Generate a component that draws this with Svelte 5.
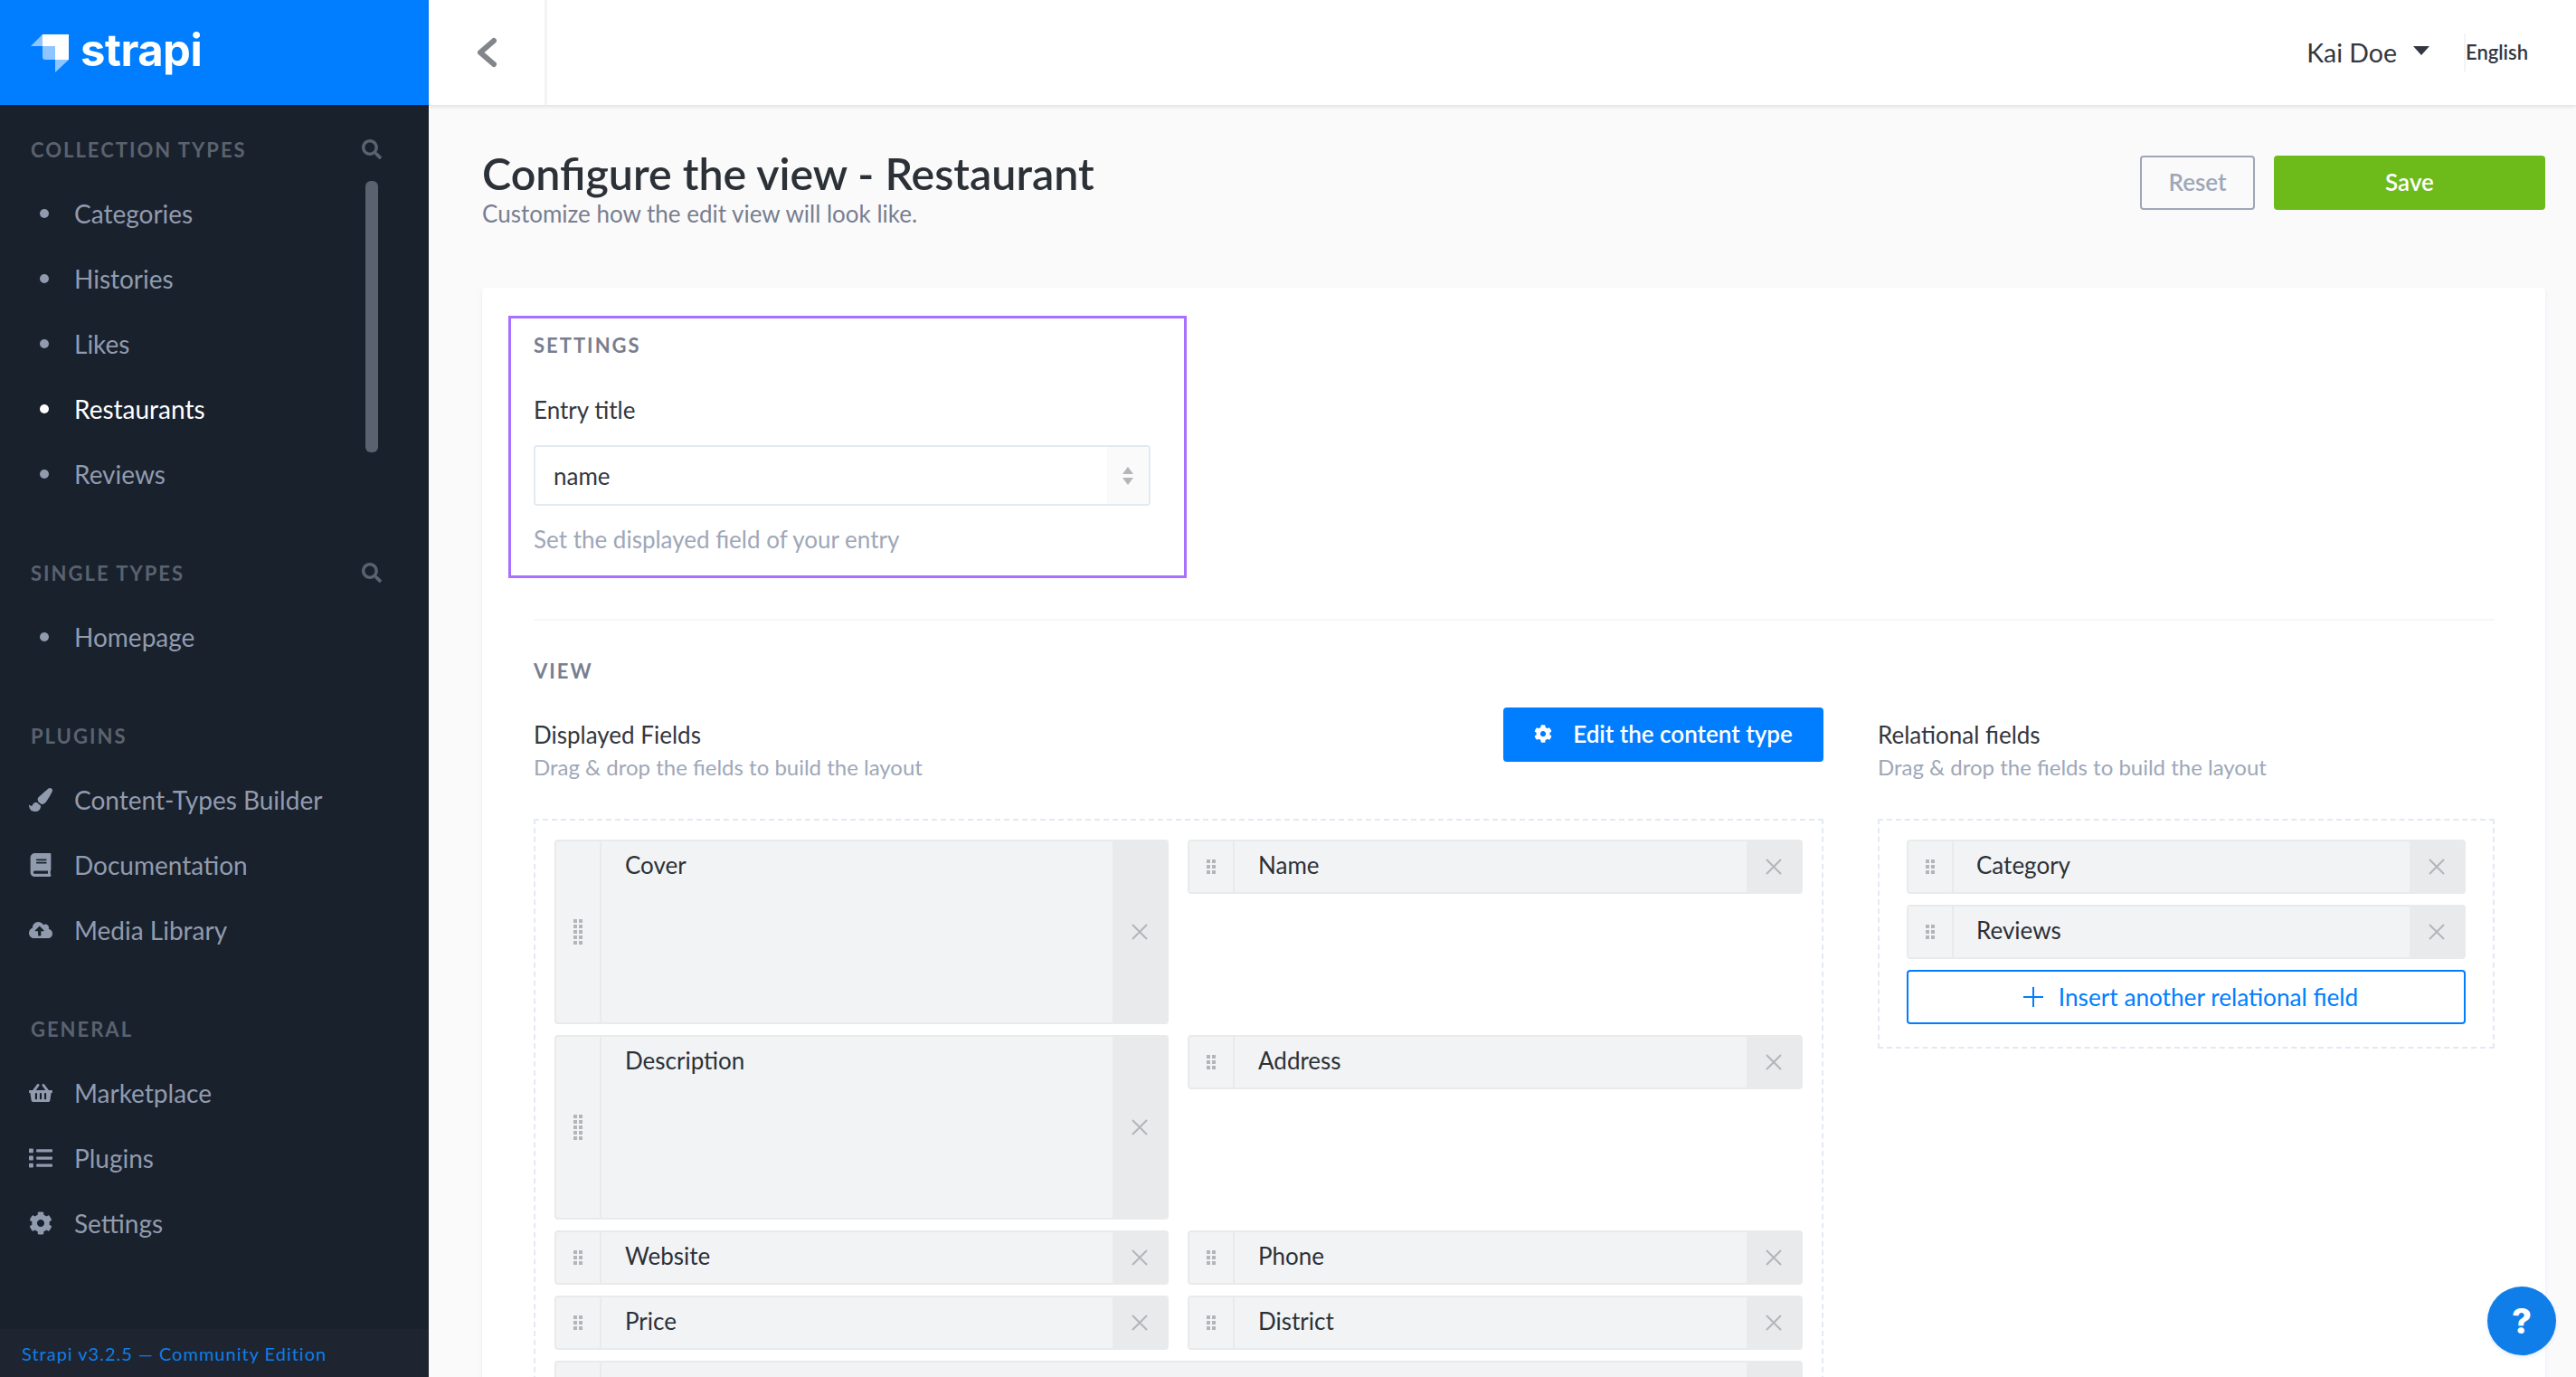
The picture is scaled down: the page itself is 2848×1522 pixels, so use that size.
<script>
  const icons = {
    search: { box: '0 0 512 512', d: 'M505 442.7L405.3 343c-4.5-4.5-10.6-7-17-7H372c27.6-35.3 44-79.7 44-128C416 93.1 322.9 0 208 0S0 93.1 0 208s93.1 208 208 208c48.3 0 92.7-16.4 128-44v16.3c0 6.4 2.5 12.5 7 17l99.7 99.7c9.4 9.4 24.6 9.4 33.9 0l28.3-28.3c9.4-9.4 9.4-24.6.1-34zM208 336c-70.7 0-128-57.2-128-128 0-70.7 57.2-128 128-128 70.7 0 128 57.2 128 128 0 70.7-57.2 128-128 128z' },
    brush: { box: '0 0 512 512', d: 'M167.02 309.34c-40.12 2.58-76.53 17.86-97.19 72.3-2.35 6.21-8 9.98-14.59 9.98-11.11 0-45.46-27.67-55.25-34.35C0 439.62 37.93 512 128 512c75.86 0 128-43.77 128-120.19 0-3.11-.65-6.08-.97-9.13l-88.01-73.34zM457.89 0c-15.16 0-29.37 6.71-40.21 16.45C213.27 199.05 192 203.34 192 257.09c0 13.7 3.25 26.76 8.73 38.7l63.82 53.18c7.21 1.8 14.64 3.03 22.39 3.03 62.11 0 98.11-45.47 211.16-256.46 7.38-14.35 13.9-29.85 13.9-45.99C512 20.64 486 0 457.89 0z' },
    book: { box: '0 0 448 512', d: 'M448 360V24c0-13.3-10.7-24-24-24H96C43 0 0 43 0 96v320c0 53 43 96 96 96h328c13.3 0 24-10.7 24-24v-16c0-7.5-3.5-14.3-8.9-18.7-4.2-15.4-4.2-59.3 0-74.7 5.4-4.3 8.9-11.1 8.9-18.6zM128 134c0-3.3 2.7-6 6-6h212c3.3 0 6 2.7 6 6v20c0 3.3-2.7 6-6 6H134c-3.3 0-6-2.7-6-6v-20zm0 64c0-3.3 2.7-6 6-6h212c3.3 0 6 2.7 6 6v20c0 3.3-2.7 6-6 6H134c-3.3 0-6-2.7-6-6v-20zm253.4 250H96c-17.7 0-32-14.3-32-32 0-17.6 14.4-32 32-32h285.4c-1.9 17.1-1.9 46.9 0 64z' },
    cloud: { box: '0 0 640 512', d: 'M537.6 226.6c4.1-10.7 6.4-22.4 6.4-34.6 0-53-43-96-96-96-19.7 0-38.1 6-53.3 16.2C367 64.2 315.3 32 256 32c-88.4 0-160 71.6-160 160 0 2.7.1 5.4.2 8.1C40.2 219.8 0 273.2 0 336c0 79.5 64.5 144 144 144h368c70.7 0 128-57.3 128-128 0-61.9-44-113.6-102.4-125.4zM393.4 288H328v112c0 8.8-7.2 16-16 16h-48c-8.8 0-16-7.2-16-16V288h-65.4c-14.3 0-21.4-17.2-11.3-27.3l105.4-105.4c6.2-6.2 16.4-6.2 22.6 0l105.4 105.4c10.1 10.1 2.9 27.3-11.3 27.3z' },
    basket: { box: '0 0 576 512', d: 'M576 216v16c0 13.255-10.745 24-24 24h-8l-26.113 182.788C514.509 462.435 494.257 480 470.37 480H105.63c-23.887 0-44.139-17.565-47.518-41.212L32 256h-8c-13.255 0-24-10.745-24-24v-16c0-13.255 10.745-24 24-24h67.341l106.78-146.821c10.395-14.292 30.407-17.453 44.701-7.058 14.293 10.395 17.453 30.408 7.058 44.701L170.477 192h235.046L326.12 82.821c-10.395-14.292-7.234-34.306 7.059-44.701 14.291-10.395 34.306-7.235 44.701 7.058L484.659 192H552c13.255 0 24 10.745 24 24zM312 392V280c0-13.255-10.745-24-24-24s-24 10.745-24 24v112c0 13.255 10.745 24 24 24s24-10.745 24-24zm112 0V280c0-13.255-10.745-24-24-24s-24 10.745-24 24v112c0 13.255 10.745 24 24 24s24-10.745 24-24zm-224 0V280c0-13.255-10.745-24-24-24s-24 10.745-24 24v112c0 13.255 10.745 24 24 24s24-10.745 24-24z' },
    list: { box: '0 0 512 512', d: 'M80 368H16a16 16 0 0 0-16 16v64a16 16 0 0 0 16 16h64a16 16 0 0 0 16-16v-64a16 16 0 0 0-16-16zm0-320H16A16 16 0 0 0 0 64v64a16 16 0 0 0 16 16h64a16 16 0 0 0 16-16V64a16 16 0 0 0-16-16zm0 160H16a16 16 0 0 0-16 16v64a16 16 0 0 0 16 16h64a16 16 0 0 0 16-16v-64a16 16 0 0 0-16-16zm416 176H176a16 16 0 0 0-16 16v32a16 16 0 0 0 16 16h320a16 16 0 0 0 16-16v-32a16 16 0 0 0-16-16zm0-320H176a16 16 0 0 0-16 16v32a16 16 0 0 0 16 16h320a16 16 0 0 0 16-16V80a16 16 0 0 0-16-16zm0 160H176a16 16 0 0 0-16 16v32a16 16 0 0 0 16 16h320a16 16 0 0 0 16-16v-32a16 16 0 0 0-16-16z' },
    cog: { box: '0 0 512 512', d: 'M487.4 315.7l-42.6-24.6c4.3-23.2 4.3-47 0-70.2l42.6-24.6c4.9-2.8 7.1-8.6 5.5-14-11.1-35.6-30-67.8-54.7-94.6-3.8-4.1-10-5.1-14.8-2.3L380.8 110c-17.9-15.4-38.5-27.3-60.8-35.1V25.8c0-5.6-3.9-10.5-9.4-11.7-36.7-8.2-74.3-7.8-109.2 0-5.5 1.2-9.4 6.1-9.4 11.7V75c-22.2 7.9-42.8 19.8-60.8 35.1L88.7 85.5c-4.9-2.8-11-1.9-14.8 2.3-24.7 26.7-43.6 58.9-54.7 94.6-1.7 5.4.6 11.2 5.5 14L67.3 221c-4.3 23.2-4.3 47 0 70.2l-42.6 24.6c-4.9 2.8-7.1 8.6-5.5 14 11.1 35.6 30 67.8 54.7 94.6 3.8 4.1 10 5.1 14.8 2.3l42.6-24.6c17.9 15.4 38.5 27.3 60.8 35.1v49.2c0 5.6 3.9 10.5 9.4 11.7 36.7 8.2 74.3 7.8 109.2 0 5.5-1.2 9.4-6.1 9.4-11.7v-49.2c22.2-7.9 42.8-19.8 60.8-35.1l42.6 24.6c4.9 2.8 11 1.9 14.8-2.3 24.7-26.7 43.6-58.9 54.7-94.6 1.5-5.5-.7-11.3-5.6-14.1zM256 336c-44.1 0-80-35.9-80-80s35.9-80 80-80 80 35.9 80 80-35.9 80-80 80z' }
  };

  const sections = [
    { title: 'Collection Types', search: true, items: [
      { label: 'Categories' }, { label: 'Histories' }, { label: 'Likes' },
      { label: 'Restaurants', active: true }, { label: 'Reviews' }
    ] },
    { title: 'Single Types', search: true, items: [{ label: 'Homepage' }] },
    { title: 'Plugins', items: [
      { label: 'Content-Types Builder', icon: 'brush' },
      { label: 'Documentation', icon: 'book' },
      { label: 'Media Library', icon: 'cloud' }
    ] },
    { title: 'General', items: [
      { label: 'Marketplace', icon: 'basket' },
      { label: 'Plugins', icon: 'list' },
      { label: 'Settings', icon: 'cog' }
    ] }
  ];

  // each row of the layout editor, the first cell sets the height
  const rows = [
    [{ label: 'Cover', tall: true }, { label: 'Name' }],
    [{ label: 'Description', tall: true }, { label: 'Address' }],
    [{ label: 'Website' }, { label: 'Phone' }],
    [{ label: 'Price' }, { label: 'District' }],
    [{ label: '', wide: true }]
  ];

  function dots(count) {
    const out = [];
    for (let r = 0; r < count; r++) {
      out.push([0, r * 6]);
      out.push([6, r * 6]);
    }
    return out;
  }
</script>

{#snippet field(f)}
  <div class="field" class:tall={f.tall} class:wide={f.wide}>
    <div class="grip">
      <svg width="10" height={(f.tall ? 5 : 3) * 6 - 2} aria-hidden="true">
        {#each dots(f.tall ? 5 : 3) as [x, y]}
          <rect {x} {y} width="4" height="4" />
        {/each}
      </svg>
    </div>
    <div class="field-name">{f.label}</div>
    <div class="remove">
      <svg width="18" height="18" viewBox="0 0 18 18" aria-hidden="true"><path d="M1 1l16 16M17 1L1 17" /></svg>
    </div>
  </div>
{/snippet}

<div class="app">
  <aside class="sidebar">
    <div class="brand">
      <svg class="mark" width="44" height="44" viewBox="34 39 44 44" aria-hidden="true">
        <path d="M47 40h29v28H61V53H47z" fill="#fff" />
        <path d="M47 40v13H34z" fill="#fff" opacity=".55" />
        <path d="M47 53h14v15H50a3 3 0 0 1-3-3z" fill="#fff" opacity=".55" />
        <path d="M61 68h15L61 82z" fill="#fff" opacity=".55" />
      </svg>
      <span class="wordmark">strapi</span>
    </div>

    <nav class="nav">
      {#each sections as s}
        <section class="nav-section">
          <div class="nav-head">
            <span>{s.title}</span>
            {#if s.search}
              <svg class="nav-search" viewBox={icons.search.box} aria-hidden="true"><path d={icons.search.d} /></svg>
            {/if}
          </div>
          <ul>
            {#each s.items as item}
              <li class:active={item.active}>
                <span class="nav-icon">
                  {#if item.icon}
                    <svg viewBox={icons[item.icon].box} aria-hidden="true"><path d={icons[item.icon].d} /></svg>
                  {:else}
                    <i class="bullet"></i>
                  {/if}
                </span>
                {item.label}
              </li>
            {/each}
          </ul>
        </section>
      {/each}
      <div class="scroll-thumb"></div>
    </nav>

    <div class="version">Strapi v3.2.5 — Community Edition</div>
  </aside>

  <main class="main">
    <header class="topbar">
      <div class="back">
        <svg width="24" height="34" viewBox="0 0 24 34" aria-hidden="true"><path d="M20 4L5 17l15 13" /></svg>
      </div>
      <div class="user">
        <span class="user-name">Kai Doe</span>
        <i class="caret"></i>
        <span class="lang">English</span>
      </div>
    </header>

    <div class="content">
      <div class="page-head">
        <div>
          <h1>Configure the view - Restaurant</h1>
          <p>Customize how the edit view will look like.</p>
        </div>
        <div class="actions">
          <button class="btn-reset">Reset</button>
          <button class="btn-save">Save</button>
        </div>
      </div>

      <div class="card">
        <section class="settings">
          <h2>Settings</h2>
          <div class="label">Entry title</div>
          <div class="select">
            <span class="select-value">name</span>
            <span class="select-arrows">
              <svg width="14" height="20" viewBox="0 0 14 20" aria-hidden="true"><path d="M7 0l6 8H1zM7 20l6-8H1z" /></svg>
            </span>
          </div>
          <div class="help">Set the displayed field of your entry</div>
        </section>

        <hr />

        <h2 class="view-title">View</h2>
        <div class="view-grid">
          <div>
            <div class="col-head">
              <div class="col-text">
                <div class="label">Displayed Fields</div>
                <div class="help">Drag &amp; drop the fields to build the layout</div>
              </div>
              <button class="btn-edit">
                <svg width="20" height="20" viewBox={icons.cog.box} aria-hidden="true"><path d={icons.cog.d} /></svg>
                Edit the content type
              </button>
            </div>
            <div class="dropzone fields">
              {#each rows as row}
                <div class="field-row" class:tall-row={row[0].tall}>
                  {#each row as f}
                    {@render field(f)}
                  {/each}
                </div>
              {/each}
            </div>
          </div>

          <div>
            <div class="col-head">
              <div class="col-text">
                <div class="label">Relational fields</div>
                <div class="help">Drag &amp; drop the fields to build the layout</div>
              </div>
            </div>
            <div class="dropzone relations">
              {@render field({ label: 'Category' })}
              {@render field({ label: 'Reviews' })}
              <button class="btn-insert">
                <svg width="22" height="22" viewBox="0 0 22 22" aria-hidden="true"><path d="M11 0v22M0 11h22" /></svg>
                Insert another relational field
              </button>
            </div>
          </div>
        </div>
      </div>
    </div>
  </main>

  <button class="help-fab">?</button>
</div>

<style>
  :global(body) {
    margin: 0;
    background: #fafafb;
  }

  * {
    box-sizing: border-box;
  }

  .app {
    display: flex;
    height: 1522px;
    overflow: hidden;
    font-family: Lato, "Liberation Sans", sans-serif;
    font-size: 26px;
    color: #333740;
    position: relative;
  }

  /* sidebar */
  .sidebar {
    width: 474px;
    flex: none;
    display: flex;
    flex-direction: column;
    background: #19212d;
  }

  .brand {
    height: 116px;
    flex: none;
    background: #007eff;
    display: flex;
    align-items: center;
    gap: 11px;
    padding: 0 0 6px 34px;
  }

  .mark {
    margin-top: 8px;
  }

  .wordmark {
    font-family: Inter, sans-serif;
    font-weight: 700;
    font-size: 49px;
    line-height: 1;
    color: #fff;
    letter-spacing: -0.5px;
  }

  .nav {
    flex: 1;
    position: relative;
    padding-top: 32px;
  }

  .nav-section {
    margin-bottom: 56px;
  }

  .nav-head {
    height: 34px;
    margin-bottom: 18px;
    padding: 0 52px 0 34px;
    display: flex;
    justify-content: space-between;
    align-items: center;
    font-size: 22px;
    font-weight: 700;
    letter-spacing: 2px;
    text-transform: uppercase;
    color: #5b626f;
  }

  .nav-search {
    width: 22px;
    height: 22px;
    fill: #5b626f;
  }

  ul {
    list-style: none;
    margin: 0;
    padding: 0;
  }

  li {
    height: 72px;
    display: flex;
    align-items: center;
    padding-left: 32px;
    font-size: 28px;
    color: #919bae;
  }

  li.active {
    color: #fff;
  }

  .nav-icon {
    width: 50px;
    flex: none;
    display: flex;
    align-items: center;
  }

  .nav-icon svg {
    width: 26px;
    height: 26px;
    fill: #919bae;
  }

  .bullet {
    width: 10px;
    height: 10px;
    margin-left: 12px;
    border-radius: 50%;
    background: currentColor;
  }

  .scroll-thumb {
    position: absolute;
    top: 84px;
    left: 404px;
    width: 14px;
    height: 300px;
    border-radius: 6px;
    background: #5a6270;
  }

  .version {
    height: 53px;
    flex: none;
    background: #1e2530;
    padding-left: 24px;
    display: flex;
    align-items: center;
    font-size: 20px;
    letter-spacing: 1px;
    color: #0e7de7;
  }

  /* main */
  .main {
    flex: 1;
    min-width: 0;
  }

  .topbar {
    height: 116px;
    background: #fff;
    box-shadow: 0 2px 4px rgba(0, 0, 0, 0.1);
    display: flex;
    align-items: center;
    justify-content: space-between;
    padding-right: 53px;
    position: relative;
  }

  .back {
    width: 131px;
    height: 100%;
    border-right: 3px solid #f3f3f4;
    display: flex;
    align-items: center;
    justify-content: center;
  }

  .back path {
    fill: none;
    stroke: #82858b;
    stroke-width: 6;
    stroke-linecap: round;
    stroke-linejoin: round;
  }

  .user {
    display: flex;
    align-items: center;
  }

  .user-name {
    font-size: 28.5px;
  }

  .caret {
    width: 0;
    height: 0;
    margin: 0 38px 0 18px;
    border-left: 9px solid transparent;
    border-right: 9px solid transparent;
    border-top: 10px solid #333740;
    transform: translateY(-2px);
  }

  .lang {
    font-size: 22px;
    font-weight: 600;
    line-height: 42px;
    border-left: 2px solid #f3f3f4;
  }

  .content {
    padding: 0 34px 0 59px;
  }

  .page-head {
    height: 202px;
    display: flex;
    justify-content: space-between;
    padding-top: 55px;
  }

  h1 {
    margin: 0;
    font-size: 48.4px;
    line-height: 40px;
    font-weight: 600;
    color: #2c3138;
  }

  .page-head p {
    margin: 7px 0 0;
    line-height: 36px;
    color: #787e8f;
  }

  .actions {
    display: flex;
    gap: 21px;
    padding-top: 1px;
  }

  button {
    font-family: inherit;
    font-size: 26px;
    cursor: pointer;
  }

  .btn-reset {
    width: 127px;
    height: 60px;
    padding-bottom: 4px;
    background: transparent;
    border: 2px solid #9ea7b8;
    border-radius: 4px;
    font-weight: 600;
    color: #9ea7b8;
  }

  .btn-save {
    width: 300px;
    height: 60px;
    padding-bottom: 3px;
    background: #6dbb1a;
    border: 0;
    border-radius: 4px;
    font-weight: 600;
    color: #fff;
  }

  .card {
    background: #fff;
    border-radius: 4px;
    box-shadow: 0 2px 4px #e3e9f3;
    padding: 31px 56px 0 57px;
  }

  h2 {
    margin: 0;
    font-size: 22px;
    line-height: 30px;
    font-weight: 700;
    letter-spacing: 2px;
    text-transform: uppercase;
    color: #787e8f;
  }

  .settings {
    width: 750px;
    height: 290px;
    margin-left: -28px;
    border: 3px solid #a970ff;
    padding: 15px 0 0 25px;
  }

  .label {
    line-height: 36px;
  }

  .settings .label {
    margin-top: 38px;
  }

  .select {
    width: 682px;
    height: 67px;
    margin-top: 21px;
    border: 2px solid #e3e9f3;
    border-radius: 4px;
    display: flex;
    justify-content: space-between;
    align-items: stretch;
  }

  .select-value {
    padding-left: 20px;
    line-height: 65px;
  }

  .select-arrows {
    width: 46px;
    background: #fafafb;
    display: flex;
    align-items: center;
    justify-content: center;
  }

  .select-arrows path {
    fill: #b3b5b9;
  }

  .help {
    line-height: 36px;
    color: #9ea7b8;
  }

  .settings .help {
    margin-top: 19px;
  }

  hr {
    margin: 45px 0 0;
    border: 0;
    border-top: 2px solid #f6f6f6;
  }

  .view-title {
    margin-top: 41px;
  }

  .view-grid {
    display: grid;
    grid-template-columns: 1426px 682px;
    gap: 60px;
  }

  .col-head {
    height: 148px;
    padding-top: 12px;
    display: flex;
    justify-content: space-between;
    align-items: flex-start;
  }

  .col-text {
    margin-top: 25px;
  }

  .col-text .help {
    font-size: 24px;
  }

  .btn-edit {
    width: 354px;
    height: 60px;
    margin-top: 13px;
    padding-bottom: 3px;
    background: #007eff;
    border: 0;
    border-radius: 4px;
    display: flex;
    align-items: center;
    justify-content: center;
    gap: 23px;
    font-weight: 600;
    color: #fff;
  }

  .btn-edit path {
    fill: #fff;
  }

  .dropzone {
    border: 2px dashed #e3e9f3;
    border-radius: 2px;
  }

  .fields {
    padding: 21px 21px 40px 21px;
    display: flex;
    flex-direction: column;
    gap: 12px;
  }

  .field-row {
    display: grid;
    grid-template-columns: 679px 680px;
    column-gap: 21px;
    height: 60px;
    align-items: start;
  }

  .field-row.tall-row {
    height: 204px;
  }

  .relations {
    padding: 21px 30px 25px 30px;
    display: grid;
    grid-auto-rows: 60px;
    row-gap: 12px;
  }

  .field {
    height: 60px;
    display: flex;
    background: #f2f3f4;
    border: 2px solid #e9eaeb;
    border-radius: 4px;
    overflow: hidden;
    color: #2c3138;
  }

  .field.tall {
    height: 204px;
  }

  .field.wide {
    grid-column: span 2;
  }

  .grip {
    width: 50px;
    flex: none;
    display: flex;
    align-items: center;
    justify-content: center;
    border-right: 2px solid #e9eaeb;
  }

  .grip rect {
    fill: #b3b5b9;
  }

  .field-name {
    flex: 1;
    padding-left: 26px;
    line-height: 53px;
  }

  .relations .field-name {
    padding-left: 25px;
  }

  .remove {
    width: 60px;
    flex: none;
    background: #e9eaeb;
    display: flex;
    align-items: center;
    justify-content: center;
  }

  .remove path {
    fill: none;
    stroke: #b3b5b9;
    stroke-width: 2;
  }

  .btn-insert {
    padding: 0 0 0 10px;
    background: #fff;
    border: 2px solid #007eff;
    border-radius: 4px;
    display: flex;
    align-items: center;
    justify-content: center;
    gap: 17px;
    font-size: 26.2px;
    color: #007eff;
  }

  .btn-insert path {
    fill: none;
    stroke: #007eff;
    stroke-width: 2;
  }

  .help-fab {
    position: absolute;
    left: 2750px;
    top: 1422px;
    width: 76px;
    height: 76px;
    border: 0;
    border-radius: 50%;
    background: #107ee8;
    box-shadow: 0 2px 4px #e3e9f3;
    font-family: Inter, sans-serif;
    font-size: 38px;
    font-weight: 800;
    color: #fff;
  }
</style>
